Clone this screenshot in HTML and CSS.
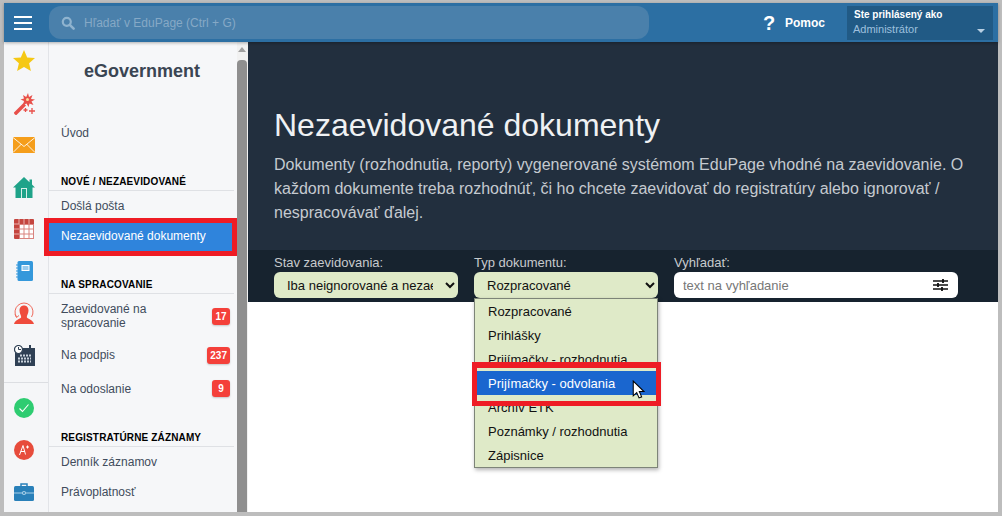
FILE: index.html
```html
<!DOCTYPE html>
<html lang="sk">
<head>
<meta charset="utf-8">
<title>Nezaevidované dokumenty</title>
<link rel="stylesheet" href="styles.css">
</head>
<body>
<div class="frame">
  <header class="topbar">
    <button class="burger" aria-label="Menu"><span></span><span></span><span></span></button>
    <div class="search">
      <svg class="search-icon" viewBox="0 0 14 14" width="14" height="14"><circle cx="5.800" cy="5.800" r="4" fill="none" stroke="#8fb3cf" stroke-width="2.200"/><path d="M8.800 8.800l3.800 3.800" stroke="#8fb3cf" stroke-width="2.600" stroke-linecap="round"/></svg>
      <span>Hľadať v EduPage (Ctrl + G)</span>
    </div>
    <div class="help"><span class="help-mark">?</span><span>Pomoc</span></div>
    <div class="user">
      <div class="user-top">Ste prihlásený ako</div>
      <div class="user-name">Administrátor</div>
      <i class="user-caret"></i>
    </div>
  </header>
  <div class="body">
    <nav class="rail">
      <div class="rail-group">
        <span class="slot"><svg viewBox="0 0 22 22" width="22" height="22"><path d="M11 0l3.200 7.400 7.800.7-5.900 5.200 1.800 7.700L11 17l-6.900 4 1.800-7.700L0 8.100l7.800-.7z" fill="#f5c814"/></svg></span>
        <span class="slot slot-low"><svg viewBox="0 0 22 22" width="22" height="22"><path d="M1 19.500L10.500 10l2.500 2.500L3.500 22c-1 .6-3-1.500-2.500-2.500z" fill="#e8504a"/><path d="M15 0l1 4 3.500-2-1.500 4 4 .5-3.500 2 2 3.500-4-1.500-1 3.500-2-3.500L10 12l1-4-3.500-1.500 3.500-1L10 2l3.200 2z" fill="#e8504a"/><circle cx="14.500" cy="6.500" r="1.500" fill="#fbe0a0"/><path d="M16 18h6M19 15v6M10.500 17h4M12.500 15v4" stroke="#e8504a" stroke-width="1.300"/></svg></span>
        <span class="slot"><svg viewBox="0 0 22 16" width="22" height="16"><rect width="22" height="16" fill="#f59e1b"/><path d="M0 .5l11 9 11-9M0 15.500l8.500-8.500M22 15.500l-8.500-8.500" fill="none" stroke="#fff" stroke-width="1" opacity=".85"/></svg></span>
        <span class="slot"><svg viewBox="0 0 22 21" width="22" height="21"><path d="M11 0L0 10.500h2.500V21h17V10.500H22l-3-3V2.500h-2.500v2.800z" fill="#1fa389"/><rect x="8" y="11" width="6" height="10" fill="#d8efe9"/><rect x="9" y="12" width="4" height="9" fill="#1fa389"/></svg></span>
        <span class="slot"><svg viewBox="0 0 20 20" width="20" height="20"><rect width="20" height="20" rx="1" fill="#c4453f"/><rect x="5" y="5" width="15" height="15" fill="#fff"/><path d="M5.500 5v15M10 5v15M15 5v15M19.500 5v15M5 5.500h15M5 10h15M5 15h15M5 19.500h15" stroke="#d9837f" stroke-width="1"/><path d="M0 5h5M0 10h5M0 15h5M5 0v5M10 0v5M15 0v5" stroke="#eab3b0" stroke-width="1"/></svg></span>
        <span class="slot"><svg viewBox="0 0 17 20" width="17" height="20"><rect x="1.500" width="15.500" height="20" rx="1.500" fill="#3498db"/><rect x="5.500" y="4" width="8" height="6" fill="#fff"/><rect x="6.500" y="5.500" width="6" height="1" fill="#3498db"/><rect x="6.500" y="7.500" width="6" height="1" fill="#3498db"/><path d="M0 4h3M0 7h3M0 10h3M0 13h3M0 16h3" stroke="#3498db" stroke-width="1.200"/></svg></span>
        <span class="slot"><svg viewBox="0 0 20 22" width="20" height="22"><path d="M2.500 15A9 9 0 1 1 17.500 15" fill="none" stroke="#ef6a5c" stroke-width="1"/><path d="M1 12.500l1.500 3 2.500-2" fill="none" stroke="#ef6a5c"/><path d="M10 3.500c3 0 4.500 2.300 4.500 5S12.800 13.500 12.800 15c0 1.800 6.200 2.500 7.200 7H0c1-4.500 7.200-5.200 7.200-7 0-1.500-1.700-3.800-1.700-6.500S7 3.500 10 3.500z" fill="#ef4b3c"/></svg></span>
        <span class="slot"><svg viewBox="0 0 21 21" width="21" height="21"><rect x="1" y="3" width="20" height="18" fill="#2f4054"/><rect x="15" y="0" width="2" height="5" fill="#2f4054"/><path d="M6 10.500h11M4 13.500h13M4 16.500h13" stroke="#c9d2db" stroke-width="2" stroke-dasharray="2 1"/><circle cx="4.500" cy="4.500" r="4" fill="#fff" stroke="#2f4054" stroke-width="1.200"/><path d="M4.500 2v2.500H7" fill="none" stroke="#2f4054"/></svg></span>
      </div>
      <div class="rail-group rail-second">
        <span class="slot"><svg viewBox="0 0 20 20" width="20" height="20"><circle cx="10" cy="10" r="10" fill="#2ecc71"/><path d="M5.500 10.500l3 3 6-7" fill="none" stroke="#fff" stroke-width="1.100"/></svg></span>
        <span class="slot"><svg viewBox="0 0 20 20" width="20" height="20"><circle cx="10" cy="10" r="10" fill="#e74c3c"/><path d="M5.500 15L9 5.500l2.500 9M6.800 11.500h4.200M13.500 5.500v3M12 7h3" fill="none" stroke="#fff" stroke-width="1"/></svg></span>
        <span class="slot"><svg viewBox="0 0 20 18" width="20" height="18"><path d="M7 3V1h6v2" fill="none" stroke="#2980b9" stroke-width="1.500"/><rect y="3" width="20" height="15" rx="1.500" fill="#2980b9"/><path d="M0 10h20" stroke="#a9cfe8" stroke-width="1"/><circle cx="10" cy="10" r="2" fill="#a9cfe8"/><circle cx="10" cy="10" r="1" fill="#2980b9"/></svg></span>
      </div>
    </nav>
    <aside class="menu">
      <h2 class="menu-title">eGovernment</h2>
      <a class="menu-item intro">Úvod</a>
      <h3 class="menu-head first">NOVÉ / NEZAEVIDOVANÉ</h3>
      <a class="menu-item">Došlá pošta</a>
      <a class="menu-item active">Nezaevidované dokumenty</a>
      <h3 class="menu-head second">NA SPRACOVANIE</h3>
      <a class="menu-item badged tall"><span>Zaevidované na<br>spracovanie</span><b class="badge">17</b></a>
      <a class="menu-item badged sign"><span>Na podpis</span><b class="badge">237</b></a>
      <a class="menu-item badged"><span>Na odoslanie</span><b class="badge">9</b></a>
      <h3 class="menu-head third">REGISTRATÚRNE ZÁZNAMY</h3>
      <a class="menu-item">Denník záznamov</a>
      <a class="menu-item">Právoplatnosť</a>
    </aside>
    <div class="scrollbar"><i class="scroll-arrow"></i><div class="scroll-thumb"></div></div>
    <main class="main">
      <section class="hero">
        <h1>Nezaevidované dokumenty</h1>
        <p>Dokumenty (rozhodnutia, reporty) vygenerované systémom EduPage vhodné na zaevidovanie. O každom dokumente treba rozhodnúť, či ho chcete zaevidovať do registratúry alebo ignorovať / nespracovávať ďalej.</p>
      </section>
      <section class="filters">
        <div class="field f1">
          <label for="stav">Stav zaevidovania:</label>
          <select id="stav" class="select"><option>Iba neignorované a nezaevidované</option></select>
        </div>
        <div class="field f2">
          <label for="typ">Typ dokumentu:</label>
          <select id="typ" class="select"><option>Rozpracované</option></select>
          <ul class="dropdown">
            <li>Rozpracované</li>
            <li>Prihlášky</li>
            <li>Prijímačky - rozhodnutia</li>
            <li class="selected">Prijímačky - odvolania</li>
            <li>Archív ETK</li>
            <li>Poznámky / rozhodnutia</li>
            <li>Zápisnice</li>
          </ul>
          <div class="mark mark-option"></div>
          <svg class="cursor" viewBox="0 0 12 19" width="13" height="20"><path d="M1 1v14l3.300-3 2.200 5 2.500-1-2.200-5h4.400z" fill="#fff" stroke="#000" stroke-width="1"/></svg>
        </div>
        <div class="field f3">
          <label for="hladat">Vyhľadať:</label>
          <div class="textbox"><input id="hladat" class="textinput" placeholder="text na vyhľadanie">
            <svg viewBox="0 0 15 14" width="15" height="14"><path d="M0 3h15M0 7h15M0 11h15" stroke="#111" stroke-width="1.300"/><path d="M10 1v4M5 5v4M9 9v4" stroke="#111" stroke-width="1.800"/></svg>
          </div>
        </div>
      </section>
    </main>
  </div>
  <div class="mark mark-menu"></div>
</div>
</body>
</html>
```

FILE: styles.css
```css
* { box-sizing: border-box; }
html, body { margin: 0; padding: 0; }
body { width: 1002px; height: 516px; overflow: hidden; font-family: "Liberation Sans", Arial, sans-serif; background: #bdbdbd; }
.frame { position: relative; width: 1002px; height: 516px; padding: 3px 4px 4px 4px; display: flex; flex-direction: column; background: #bdbdbd; }

.topbar { height: 39px; flex: none; display: flex; align-items: center; background: #2c6fa3; box-shadow: 0 1px 3px rgba(0,0,0,.3); position: relative; z-index: 3; }
.burger { width: 45px; height: 39px; padding: 0 0 0 10px; border: 0; background: none; display: flex; flex-direction: column; gap: 4px; justify-content: center; }
.burger span { display: block; width: 18px; height: 2px; background: #fff; }
.search { width: 600px; height: 33px; padding-left: 12px; border-radius: 12px; background: #4a80ab; display: flex; align-items: center; gap: 9px; color: #86a9c6; font-size: 12px; }
.help { display: flex; align-items: center; margin-left: 114px; color: #fff; font-weight: bold; font-size: 12px; width: 84px; }
.help-mark { font-size: 20px; width: 22px; line-height: 20px; }
.user { position: relative; width: 146px; height: 34px; padding: 2px 7px 3px 6px; background: #215a85; font-size: 10px; }
.user-top { color: #fff; font-weight: bold; line-height: 13px; padding-left: 1px; }
.user-name { color: #9ec0de; line-height: 16px; font-size: 11px; }
.user-caret { position: absolute; right: 8px; bottom: 7px; border-style: solid; border-color: #b8cfe3 transparent transparent; border-width: 4px 4px 0; }

.body { flex: 1; min-height: 0; display: flex; background: #fff; }
.rail { width: 45px; flex: none; background: #f5f6f8; border-right: 1px solid #e2e4e8; display: flex; flex-direction: column; }
.rail-group { display: flex; flex-direction: column; margin-top: -2px; }
.slot { height: 42px; display: flex; align-items: center; justify-content: center; padding-right: 4px; flex: none; }
.slot-low { padding-top: 2px; }
.slot svg { display: block; flex: none; }
.rail-second { margin-top: 6px; padding-top: 4px; border-top: 1px solid #dcdee2; }

.menu { width: 188px; flex: none; background: #f6f7f9; font-size: 12px; overflow: hidden; }
.menu-title { margin: 19px 0 0; height: 21px; font-size: 18px; line-height: 21px; text-align: center; color: #3a4553; font-weight: bold; padding-right: 2px; }
.menu-item { display: flex; align-items: center; height: 30px; padding-left: 12px; color: #414c5c; line-height: 14px; }
.intro { margin-top: 35px; padding-top: 2px; }
.menu-head { margin: 0; height: 17px; padding: 0 0 0 12px; border-bottom: 1px solid #dfe1e5; font-size: 10px; line-height: 15px; color: #000; font-weight: bold; letter-spacing: .15px; width: 185px; }
.first { margin-top: 27px; }
.second { margin-top: 26px; }
.third { margin-top: 25px; }
.active { width: 183px; background: #2f84dc; color: #fff; }
.badged { justify-content: space-between; padding-right: 7px; width: 188px; height: 33px; }
.tall { height: 44px; }
.sign { height: 34px; }
.badge { display: block; min-width: 18px; height: 17px; padding: 0 3px; border-radius: 3px; background: #f4403a; color: #fff; font-size: 10px; line-height: 17px; text-align: center; box-shadow: 0 1px 2px rgba(0,0,0,.2); }

.scrollbar { width: 11px; flex: none; background: #f1f1f1; position: relative; padding-top: 18px; }
.scroll-arrow { position: absolute; top: 5px; left: 1px; border-style: solid; border-color: transparent transparent #a0a0a0; border-width: 0 4.500px 5px; }
.scroll-thumb { width: 10px; height: 452px; background: #8f8f8f; border-radius: 4px 4px 0 0; }

.main { flex: 1; min-width: 0; background: #fff; }
.hero { height: 208px; padding: 63px 26px 0; background: #222f3e; }
.hero h1 { margin: 0; font-size: 32px; line-height: 40px; font-weight: normal; color: #eff1f3; }
.hero p { margin: 8px 0 0; font-size: 16px; line-height: 24px; color: #c5cad0; }
.filters { height: 52px; padding: 5px 26px 0; background: #17232f; display: flex; color: #c7cacd; }
.field { position: relative; font-size: 13px; }
.field label { display: block; line-height: 15px; height: 17px; font-size: 13px; }
.f1 { width: 184px; margin-right: 16px; }
.f2 { width: 184px; margin-right: 16px; }
.f3 { width: 284px; }
.select { display: block; width: 184px; height: 26px; background-color: #dfeac8; border: 0; border-radius: 6px; color: #111; font-family: inherit; font-size: 13px; padding: 0 9px 0 9px; }
.textbox { height: 26px; background: #fff; border-radius: 6px; display: flex; align-items: center; justify-content: space-between; padding: 0 10px 0 9px; }
.textinput { flex: 1; min-width: 0; border: 0; padding: 0; background: none; font-family: inherit; font-size: 13px; color: #111; }
.textinput::placeholder { color: #777; opacity: 1; }

.dropdown { position: absolute; z-index: 2; left: 0; top: 43px; width: 184px; height: 170px; margin: 0; padding: 0; list-style: none; background: #dfeac8; border: 1px solid #7d8478; box-shadow: 1px 2px 4px rgba(0,0,0,.3); color: #111; font-size: 13px; }
.dropdown li { height: 24px; line-height: 25px; padding-left: 13px; }
.dropdown .selected { background: #1a66cf; color: #fff; }
.mark { position: absolute; z-index: 5; border: 5px solid #ee1c25; }
.mark-option { left: -2px; top: 107px; width: 189px; height: 44px; border-top-width: 6px; }
.mark-menu { left: 44px; top: 218px; width: 193px; height: 38px; }
.cursor { position: absolute; z-index: 6; left: 158px; top: 125px; }
```
